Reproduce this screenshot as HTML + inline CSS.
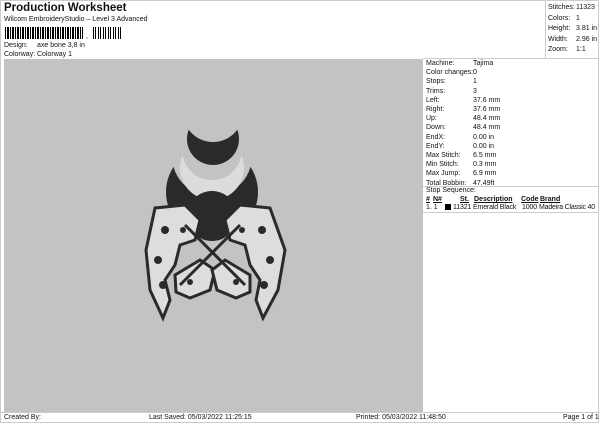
<!DOCTYPE html>
<html><head><style>
body{margin:0;width:600px;height:424px;background:#fff;font-family:"Liberation Sans",sans-serif;color:#111;position:relative;overflow:hidden}
.a{position:absolute;white-space:nowrap;font-size:7px;line-height:9px}
</style></head><body>
<div style="position:absolute;left:0;top:0;width:599px;height:423px;border:1px solid #ccc;box-sizing:border-box"></div>
<div class="a" style="left:4px;top:2px;font-size:11.5px;line-height:13px;font-weight:bold">Production Worksheet</div>
<div class="a" style="left:4px;top:15px">Wilcom EmbroideryStudio – Level 3 Advanced</div>
<div style="position:absolute;left:5px;top:27px;width:78px;height:12px;background:repeating-linear-gradient(90deg,#000 0 1px,#fff 1px 2px,#000 2px 4px,#fff 4px 5px)"></div>
<div style="position:absolute;left:93px;top:27px;width:30px;height:12px;background:repeating-linear-gradient(90deg,#000 0 1px,#fff 1px 2px,#000 2px 3px,#fff 3px 5px)"></div>
<div class="a" style="left:86px;top:32px">,</div>
<div class="a" style="left:4px;top:41px">Design:</div><div class="a" style="left:37px;top:41px">axe bone 3,8 in</div>
<div class="a" style="left:4px;top:50px">Colorway:</div><div class="a" style="left:37px;top:50px">Colorway 1</div>
<div style="position:absolute;left:545px;top:0;width:1px;height:58px;background:#ccc"></div>
<div class="a" style="left:548px;top:3px;line-height:10.5px">Stitches:<br>Colors:<br>Height:<br>Width:<br>Zoom:</div>
<div class="a" style="left:576px;top:3px;line-height:10.5px">11323<br>1<br>3.81 in<br>2.96 in<br>1:1</div>
<div style="position:absolute;left:4px;top:59px;width:419px;height:353px;background:#c3c3c3">
<svg width="419" height="353" viewBox="4 59 419 353">
<circle cx="212" cy="192" r="46" fill="#2a2a2a"/>
<circle cx="212" cy="156" r="40" fill="#c3c3c3"/>
<circle cx="212" cy="168" r="32" fill="#dcdcdc"/>
<circle cx="212" cy="150" r="30" fill="#c3c3c3"/>
<circle cx="213" cy="139" r="26" fill="#2a2a2a"/>
<circle cx="213" cy="112" r="30" fill="#c3c3c3"/>
<circle cx="212" cy="216" r="25" fill="#2a2a2a"/>
<g fill="#ddd" stroke="#2a2a2a" stroke-width="3">
<path d="M155 208 L185 205 L200 220 L195 240 L180 245 L175 265 L165 280 L170 300 L163 318 L150 290 L146 250 Z"/>
<path d="M270 208 L240 205 L225 220 L230 240 L245 245 L250 265 L260 280 L256 300 L263 318 L278 290 L285 250 Z"/>
<path d="M175 275 L200 260 L215 270 L210 290 L190 298 L176 292 Z"/>
<path d="M250 275 L225 260 L212 270 L217 290 L236 298 L250 292 Z"/>
<path d="M185 225 L245 285" fill="none"/>
<path d="M240 225 L180 285" fill="none"/>
</g>
<g fill="#2a2a2a">
<circle cx="165" cy="230" r="4"/><circle cx="158" cy="260" r="4"/><circle cx="163" cy="285" r="4"/>
<circle cx="262" cy="230" r="4"/><circle cx="270" cy="260" r="4"/><circle cx="264" cy="285" r="4"/>
<circle cx="190" cy="282" r="3"/><circle cx="236" cy="282" r="3"/><circle cx="183" cy="230" r="3"/><circle cx="242" cy="230" r="3"/>
</g>
</svg></div>
<div style="position:absolute;left:423px;top:58px;width:176px;height:1px;background:#ccc"></div>
<div class="a" style="left:426px;top:59px;line-height:9.2px">Machine:<br>Color changes:<br>Stops:<br>Trims:<br>Left:<br>Right:<br>Up:<br>Down:<br>EndX:<br>EndY:<br>Max Stitch:<br>Min Stitch:<br>Max Jump:<br>Total Bobbin:</div>
<div class="a" style="left:473px;top:59px;line-height:9.2px">Tajima<br>0<br>1<br>3<br>37.6 mm<br>37.6 mm<br>48.4 mm<br>48.4 mm<br>0.00 in<br>0.00 in<br>6.5 mm<br>0.3 mm<br>6.9 mm<br>47.49ft</div>
<div style="position:absolute;left:423px;top:186px;width:176px;height:1px;background:#ccc"></div>
<div class="a" style="left:426px;top:186px">Stop Sequence:</div>
<div class="a" style="left:426px;top:195px;font-weight:bold;text-decoration:underline">#</div>
<div class="a" style="left:433px;top:195px;font-weight:bold;text-decoration:underline">N#</div>
<div class="a" style="left:460px;top:195px;font-weight:bold;text-decoration:underline">St.</div>
<div class="a" style="left:474px;top:195px;font-weight:bold;text-decoration:underline">Description</div>
<div class="a" style="left:521px;top:195px;font-weight:bold;text-decoration:underline">Code</div>
<div class="a" style="left:540px;top:195px;font-weight:bold;text-decoration:underline">Brand</div>
<div class="a" style="left:426px;top:203px">1. 1</div>
<div style="position:absolute;left:445px;top:204px;width:6px;height:6px;background:#000"></div>
<div class="a" style="left:453px;top:203px;letter-spacing:-0.15px">11321 Emerald Black</div>
<div class="a" style="left:522px;top:203px;letter-spacing:-0.15px">1000</div>
<div class="a" style="left:539px;top:203px;letter-spacing:-0.2px">Madeira Classic 40</div>
<div style="position:absolute;left:423px;top:212px;width:176px;height:1px;background:#ccc"></div>
<div style="position:absolute;left:0;top:412px;width:600px;height:1px;background:#ccc"></div>
<div class="a" style="left:4px;top:413px">Created By:</div>
<div class="a" style="left:149px;top:413px">Last Saved: 05/03/2022 11:25:15</div>
<div class="a" style="left:356px;top:413px">Printed: 05/03/2022 11:48:50</div>
<div class="a" style="left:563px;top:413px">Page 1 of 1</div>
</body></html>
